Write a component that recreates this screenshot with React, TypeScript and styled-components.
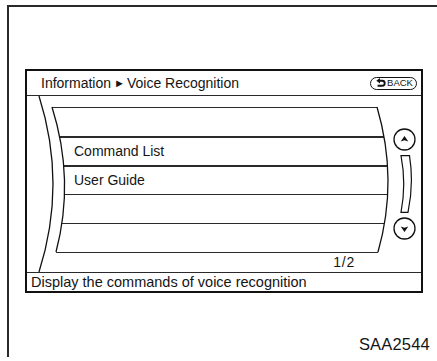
import React from 'react';
import styled, { createGlobalStyle } from 'styled-components';

const GlobalStyle = createGlobalStyle`
  html, body {
    margin: 0;
    padding: 0;
    background: #ffffff;
  }

  body {
    font-family: 'Liberation Sans', Arial, sans-serif;
    color: #151515;
  }
`;

const LINE = '#2a2a2a';

const Page = styled.div`
  width: 437px;
  height: 361px;
  overflow: hidden;
  background: #ffffff;
`;

const Frame = styled.div`
  box-sizing: border-box;
  margin: 5px 0 0 7px;
  width: 430px;
  height: 352px;
  padding: 62px 7px 0 16px;
  border-top: 2px solid ${LINE};
  border-left: 2px solid ${LINE};
  display: flex;
  flex-direction: column;
`;

const Screen = styled.div`
  box-sizing: border-box;
  width: 398px;
  height: 224px;
  border: 2px solid #111111;
  display: flex;
  flex-direction: column;
`;

const Header = styled.div`
  box-sizing: border-box;
  height: 25px;
  padding: 0 4px 0 14px;
  border-bottom: 1px solid ${LINE};
  display: flex;
  align-items: center;
  justify-content: space-between;
`;

const Breadcrumb = styled.div`
  font-size: 14px;
  line-height: 24px;
  white-space: nowrap;
`;

const Arrow = styled.span`
  display: inline-block;
  font-size: 11px;
  vertical-align: 1px;
  margin: 0 2px 0 3px;
`;

const BackButton = styled.div`
  box-sizing: border-box;
  width: 47px;
  height: 13px;
  padding-left: 2px;
  border: 1.5px solid #111111;
  border-radius: 7px;
  display: flex;
  align-items: center;
  justify-content: center;
  gap: 1px;
  font-size: 9.5px;
  line-height: 10px;
`;

const Body = styled.div`
  position: relative;
  height: 176px;
  display: flex;
`;

const ListColumn = styled.div`
  flex: 1;
  display: flex;
  flex-direction: column;
  padding: 11px 0 0 21px;
`;

const Rows = styled.div`
  width: 344px;
  display: flex;
  flex-direction: column;
  border-bottom: 1px solid ${LINE};
  clip-path: path('M4 0 L329 0 Q350.5 73 330 146 L8 146 Q27 73 4 0 Z');
`;

const Row = styled.div<{ $strong?: boolean }>`
  box-sizing: border-box;
  height: 29px;
  padding-left: 26px;
  border-top: ${({ $strong }) => ($strong ? '2px' : '1px')} solid ${LINE};
  font-size: 14px;
  line-height: 27px;
  white-space: nowrap;
`;

const PageIndicator = styled.div`
  width: 307px;
  text-align: right;
  font-size: 14px;
  line-height: 19px;
  letter-spacing: 0.8px;
`;

const ScrollColumn = styled.div`
  width: 28px;
  padding: 32px 5px 0 0;
  box-sizing: border-box;
  display: flex;
  flex-direction: column;
  align-items: center;
  gap: 4px;
`;

const Bezel = styled.svg`
  position: absolute;
  left: 0;
  top: 0;
  pointer-events: none;
`;

const Footer = styled.div`
  box-sizing: border-box;
  flex: 1;
  padding-left: 4px;
  border-top: 1px solid ${LINE};
  font-size: 14.5px;
  line-height: 18px;
  white-space: nowrap;
`;

const Caption = styled.div`
  margin-top: auto;
  margin-bottom: 4px;
  align-self: flex-end;
  font-size: 16.5px;
  line-height: 18px;
  letter-spacing: 0.2px;
`;

function BackIcon () {
  return (
    <svg width='10' height='10' viewBox='0 0 10 10'>
      <path d='M3.2 2.8 H6.2 A2.5 2.5 0 0 1 6.2 7.8 H1.6' fill='none' stroke='#111' strokeWidth='1.9' />
      <path d='M0.3 2.8 L4 0 L4 5.6 Z' fill='#111' />
    </svg>
  );
}

function ScrollButton ({ down }: { down?: boolean }) {
  return (
    <svg width='23' height='23' viewBox='0 0 23 23'>
      <circle cx='11.5' cy='11.5' r='10.5' fill='#fff' stroke='#111' strokeWidth='1.3' />
      <g transform={down ? 'rotate(180 11.5 11.5)' : undefined}>
        <path d='M11.5 8 L15.3 13.6 L11.5 12.2 L7.7 13.6 Z' fill='#111' />
      </g>
    </svg>
  );
}

function ScrollTrack () {
  return (
    <svg width='16' height='58' viewBox='0 0 16 58'>
      <path d='M4 0.7 L12.5 0.7 Q17 29 11 57.3 L4 57.3 Q9.5 29 4 0.7 Z' fill='#fff' stroke='#111' strokeWidth='1.2' />
    </svg>
  );
}

export default function App () {
  return (
    <Page>
      <GlobalStyle />
      <Frame>
        <Screen>
          <Header>
            <Breadcrumb>
              Information<Arrow>►</Arrow>Voice Recognition
            </Breadcrumb>
            <BackButton>
              <BackIcon />
              <span>BACK</span>
            </BackButton>
          </Header>
          <Body>
            <ListColumn>
              <Rows>
                <Row />
                <Row $strong>Command List</Row>
                <Row $strong>User Guide</Row>
                <Row />
                <Row />
              </Rows>
              <PageIndicator>1/2</PageIndicator>
            </ListColumn>
            <ScrollColumn>
              <ScrollButton />
              <ScrollTrack />
              <ScrollButton down />
            </ScrollColumn>
            <Bezel width='394' height='176' viewBox='0 0 394 176'>
              <path d='M12 0 Q40 88 12 176' fill='none' stroke='#111' strokeWidth='1.3' />
              <path d='M25 11 Q48 84 29 156' fill='none' stroke='#111' strokeWidth='1.3' />
              <path d='M350 11 Q371.5 84 351 156' fill='none' stroke='#111' strokeWidth='1.3' />
            </Bezel>
          </Body>
          <Footer>Display the commands of voice recognition</Footer>
        </Screen>
        <Caption>SAA2544</Caption>
      </Frame>
    </Page>
  );
}
